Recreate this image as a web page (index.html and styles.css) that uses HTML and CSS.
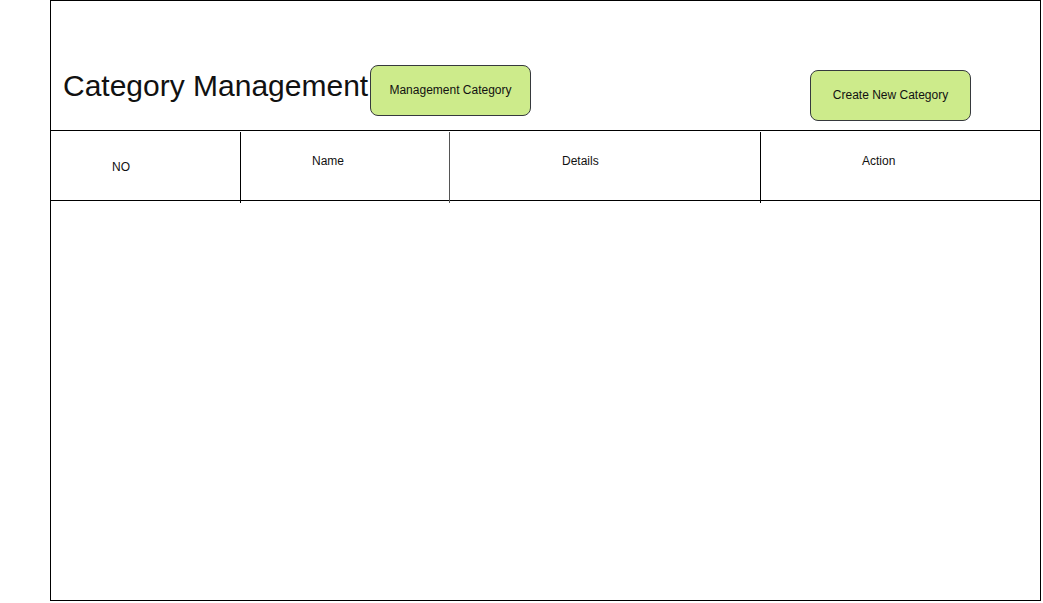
FILE: index.html
```html
<!DOCTYPE html>
<html>
<head>
<meta charset="utf-8">
<link rel="stylesheet" href="styles.css">
</head>
<body>
<div class="frame">
  <div class="top">
    <h1 class="title">Category Management</h1>
    <div class="btn btn-manage">Management Category</div>
    <div class="btn btn-create">Create New Category</div>
  </div>
  <div class="thead">
    <div class="cell c-no">NO</div>
    <div class="divider"></div>
    <div class="cell c-name">Name</div>
    <div class="divider divider-grey"></div>
    <div class="cell c-details">Details</div>
    <div class="divider"></div>
    <div class="cell c-action">Action</div>
  </div>
</div>
</body>
</html>
```
FILE: styles.css
```css
* { box-sizing: border-box; }
html, body { margin: 0; padding: 0; background: #fff; }
body {
  font-family: "Liberation Sans", Arial, Helvetica, sans-serif;
  color: #000;
}
.frame {
  margin-left: 50px;
  width: 991px;
  height: 601px;
  border: 1px solid #000;
}
.top {
  height: 130px;
  border-bottom: 1px solid #000;
  display: flex;
  align-items: flex-start;
  padding-left: 12px;
}
.title {
  margin: 68px 0 0 0;
  width: 307px;
  flex: none;
  font-size: 30px;
  line-height: 34px;
  font-weight: normal;
  white-space: nowrap;
  color: #111;
}
.btn {
  flex: none;
  width: 161px;
  height: 51px;
  border: 1px solid #36393d;
  border-radius: 8px;
  background: #cdeb8b;
  display: flex;
  align-items: center;
  justify-content: center;
  font-size: 12px;
  color: #111;
  padding-bottom: 2px;
}
.btn-manage { margin-top: 64px; }
.btn-create { margin-top: 69px; margin-left: 279px; }
.thead {
  height: 70px;
  border-bottom: 1px solid #000;
  display: flex;
  align-items: flex-start;
}
.cell {
  height: 69px;
  font-size: 12px;
  line-height: 14px;
  color: #111;
  padding-top: 23px;
}
.c-no { width: 189px; padding-left: 61px; padding-top: 29px; }
.c-name { width: 208px; padding-left: 71px; }
.c-details { width: 310px; padding-left: 112px; }
.c-action { width: 279px; padding-left: 101px; }
.divider {
  flex: none;
  width: 1px;
  height: 71px;
  margin-top: 1px;
  background: #000;
}
.divider-grey { background: #555; }
```
